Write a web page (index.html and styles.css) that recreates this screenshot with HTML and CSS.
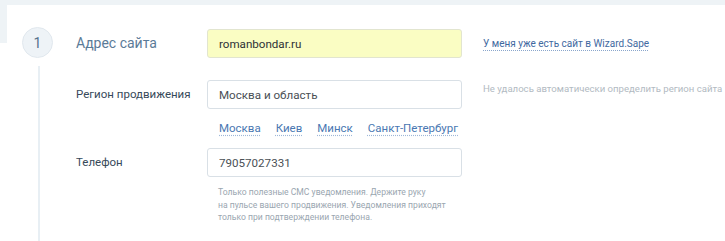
FILE: index.html
```html
<!DOCTYPE html>
<html lang="ru">
<head>
<meta charset="UTF-8">
<title>Добавление сайта</title>
<link rel="stylesheet" href="styles.css">
</head>
<body>
  <div class="card">
    <section class="step">
      <div class="marker">
        <span class="num">1</span>
        <span class="line"></span>
      </div>

      <div class="fields">
        <!-- адрес -->
        <div class="row row-site">
          <label class="lbl lbl-main">Адрес сайта</label>
          <input class="inp inp-filled" type="text" value="romanbondar.ru">
          <a class="note-link" href="#">У меня уже есть сайт в Wizard.Sape</a>
        </div>

        <!-- регион -->
        <div class="row row-region">
          <label class="lbl">Регион продвижения</label>
          <div>
            <input class="inp" type="text" value="Москва и область">
            <div class="cities">
              <a href="#">Москва</a>
              <a href="#">Киев</a>
              <a href="#">Минск</a>
              <a href="#">Санкт-Петербург</a>
            </div>
          </div>
          <p class="note">Не удалось автоматически определить регион сайта</p>
        </div>

        <!-- телефон -->
        <div class="row">
          <label class="lbl">Телефон</label>
          <div>
            <input class="inp" type="text" value="79057027331">
            <p class="hint">Только полезные СМС уведомления. Держите руку<br>на пульсе вашего продвижения. Уведомления приходят<br>только при подтверждении телефона.</p>
          </div>
        </div>
      </div>
    </section>
  </div>
</body>
</html>
```
FILE: styles.css
```css
/* ---------- GLOBAL ---------- */
*{box-sizing:border-box;margin:0;padding:0;}
html,body{height:100%;}
body{
  font-family:Roboto,"Noto Sans",Arial,sans-serif;
  background:linear-gradient(#eef3f6 43px,#fff 43px);
  color:#37495a;overflow:hidden;
}
.card{margin:5px 0 0 7px;background:#fff;height:calc(100% - 5px);}

/* ---------- STEP ---------- */
.step{display:flex;padding:22px 0 0 15px;height:100%;}
.marker{width:31px;display:flex;flex-direction:column;align-items:center;flex-shrink:0;}
.num{
  width:31px;height:31px;border-radius:50%;background:#eef3f7;border:1px solid #e1e8ee;
  display:flex;align-items:center;justify-content:center;
  font-size:14px;color:#56728d;
}
.line{width:2px;flex:1;background:#e8eff4;margin-top:8px;margin-left:2px;}

.fields{margin:2px 0 0 23px;}
.row{display:grid;grid-template-columns:131px 255px 1fr;align-items:start;}
.row-site{margin-bottom:22px;}
.row-region{margin-bottom:11px;}

.lbl{line-height:29px;font-size:11.5px;color:#37495a;white-space:nowrap;}
.lbl-main{font-size:14px;color:#5b7b98;}

/* ---------- INPUTS ---------- */
.inp{
  display:block;width:255px;height:29px;padding:0 11px;
  border:1px solid #d9e0e6;border-radius:3px;background:#fff;
  font-family:inherit;font-size:11.6px;color:#4a4f55;outline:none;
}
.inp-filled{background:#fafdc3;border-color:#e2e5cf;color:#2d3136;}

/* ---------- LINKS / NOTES ---------- */
.note-link{
  margin-left:21px;font-size:10px;line-height:29px;color:#3f69a0;
  text-decoration:underline dotted #8aa6cc;text-underline-offset:3px;white-space:nowrap;
}
.note{margin:1px 0 0 21px;font-size:9.6px;line-height:16px;color:#b2bac2;white-space:nowrap;}

.cities{display:flex;gap:15px;margin:10px 0 0 12px;line-height:18px;}
.cities a{
  font-size:11.5px;color:#4a78b2;text-decoration:underline dotted #9fb8d8;text-underline-offset:3px;
}

.hint{margin:9px 0 0 11px;font-size:8.6px;line-height:12.5px;color:#9aa6b0;white-space:nowrap;}
```
